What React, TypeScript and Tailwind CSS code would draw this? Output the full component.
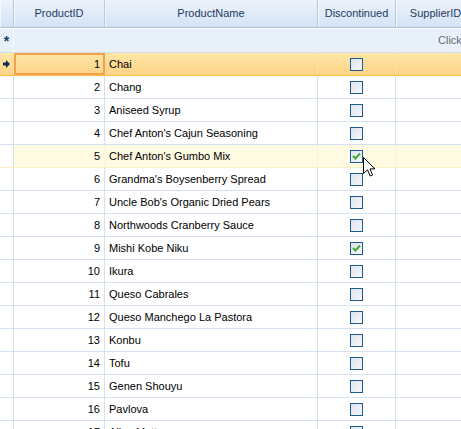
import React from 'react';

const products: [number, string, boolean][] = [
  [1, 'Chai', false],
  [2, 'Chang', false],
  [3, 'Aniseed Syrup', false],
  [4, "Chef Anton's Cajun Seasoning", false],
  [5, "Chef Anton's Gumbo Mix", true],
  [6, "Grandma's Boysenberry Spread", false],
  [7, "Uncle Bob's Organic Dried Pears", false],
  [8, 'Northwoods Cranberry Sauce', false],
  [9, 'Mishi Kobe Niku', true],
  [10, 'Ikura', false],
  [11, 'Queso Cabrales', false],
  [12, 'Queso Manchego La Pastora', false],
  [13, 'Konbu', false],
  [14, 'Tofu', false],
  [15, 'Genen Shouyu', false],
  [16, 'Pavlova', false],
  [17, 'Alice Mutton', false],
];

const cols = 'grid grid-cols-[14px_91px_213px_78px_80px_120px]';

const CheckBox = ({ checked }: { checked: boolean }) => (
  <div className="w-[13px] h-[13px] border border-[#1f5b8e] bg-gradient-to-br from-[#dde3ee] to-[#f7f8fb] flex items-center justify-center">
    {checked && (
      <svg width="9" height="8" viewBox="0 0 9 8">
        <path d="M1 4 L3.5 6.5 L8 1.5" fill="none" stroke="#3fae34" strokeWidth="2" />
      </svg>
    )}
  </div>
);

const HeaderCell = ({ children }: { children?: React.ReactNode }) => (
  <div className="h-[28px] border-r border-[#b5c9e3] shadow-[inset_1px_0_0_#f4f8fd] border-b border-b-[#a9c1e0] flex items-center justify-center text-[#1e3a5f] whitespace-nowrap overflow-hidden">
    {children}
  </div>
);

export default function App() {
  return (
    <div
      className="w-[461px] h-[429px] overflow-hidden bg-white relative text-[11px] text-black"
      style={{ fontFamily: '"Liberation Sans", Arial, sans-serif' }}
    >
      <div className="w-[700px]">
        {/* header */}
        <div className={`${cols} bg-gradient-to-b from-[#edf3fb] to-[#d3e2f5]`}>
          <HeaderCell />
          <HeaderCell>ProductID</HeaderCell>
          <HeaderCell>ProductName</HeaderCell>
          <HeaderCell>Discontinued</HeaderCell>
          <HeaderCell>SupplierID</HeaderCell>
          <HeaderCell>CategoryID</HeaderCell>
        </div>

        {/* new row */}
        <div className="flex h-[25px] bg-[#e8f0fa] border-t border-t-white border-b border-b-[#d3e0f1]">
          <div className="w-[14px] border-r border-[#f6f9fd] flex items-center justify-center text-[#1a3a6a] text-[14px] font-bold leading-none">
            *
          </div>
          <div className="flex-1 flex items-center pl-[424px] text-[#6b6b6b] whitespace-nowrap">
            Click here to add new row
          </div>
        </div>

        {/* rows */}
        {products.map(([id, name, disc]) => {
          const selected = id === 1;
          const hover = id === 5;
          const rowBg = selected
            ? 'bg-gradient-to-b from-[#fee6a8] to-[#fdd386] border-b-[#fbbf5d]'
            : hover
              ? 'bg-[#fffbe3] border-b-[#fcefc4]'
              : 'bg-white border-b-[#d5e1f2]';
          const line = selected ? 'border-[#fde3a6]' : hover ? 'border-[#fdf3d2]' : 'border-[#d5e1f2]';
          return (
            <div key={id} className={`${cols} h-[23px] border-b ${rowBg}`}>
              <div className={`border-r ${selected ? 'border-[#fde3a6]' : 'border-[#d5e1f2] bg-white'} flex items-center justify-center`}>
                {selected && (
                  <svg width="7" height="8" viewBox="0 0 7 8">
                    <path d="M0 2.5 H3 V0 L7 4 L3 8 V5.5 H0 Z" fill="#0e2a55" />
                  </svg>
                )}
              </div>
              <div
                className={`border-r ${line} flex items-center justify-end pr-[4px] ${
                  selected ? 'outline-2 outline-[#f7a04a] -outline-offset-2' : ''
                }`}
              >
                {id}
              </div>
              <div className={`border-r ${line} flex items-center pl-[4px] whitespace-nowrap overflow-hidden`}>{name}</div>
              <div className={`border-r ${line} flex items-center justify-center pr-[1px]`}>
                <CheckBox checked={disc} />
              </div>
              <div className={`border-r ${line}`} />
              <div className={`border-r ${line}`} />
            </div>
          );
        })}
      </div>

      {/* mouse cursor */}
      <svg className="absolute left-[363px] top-[157px]" width="13" height="21" viewBox="0 0 13 21">
        <path
          d="M0.5 0.5 L0.5 16.5 L4.5 12.8 L7.2 19 L9.6 18 L7 11.9 L12 11.9 Z"
          fill="#fff"
          stroke="#000"
          strokeWidth="1"
          strokeLinejoin="miter"
        />
      </svg>
    </div>
  );
}
